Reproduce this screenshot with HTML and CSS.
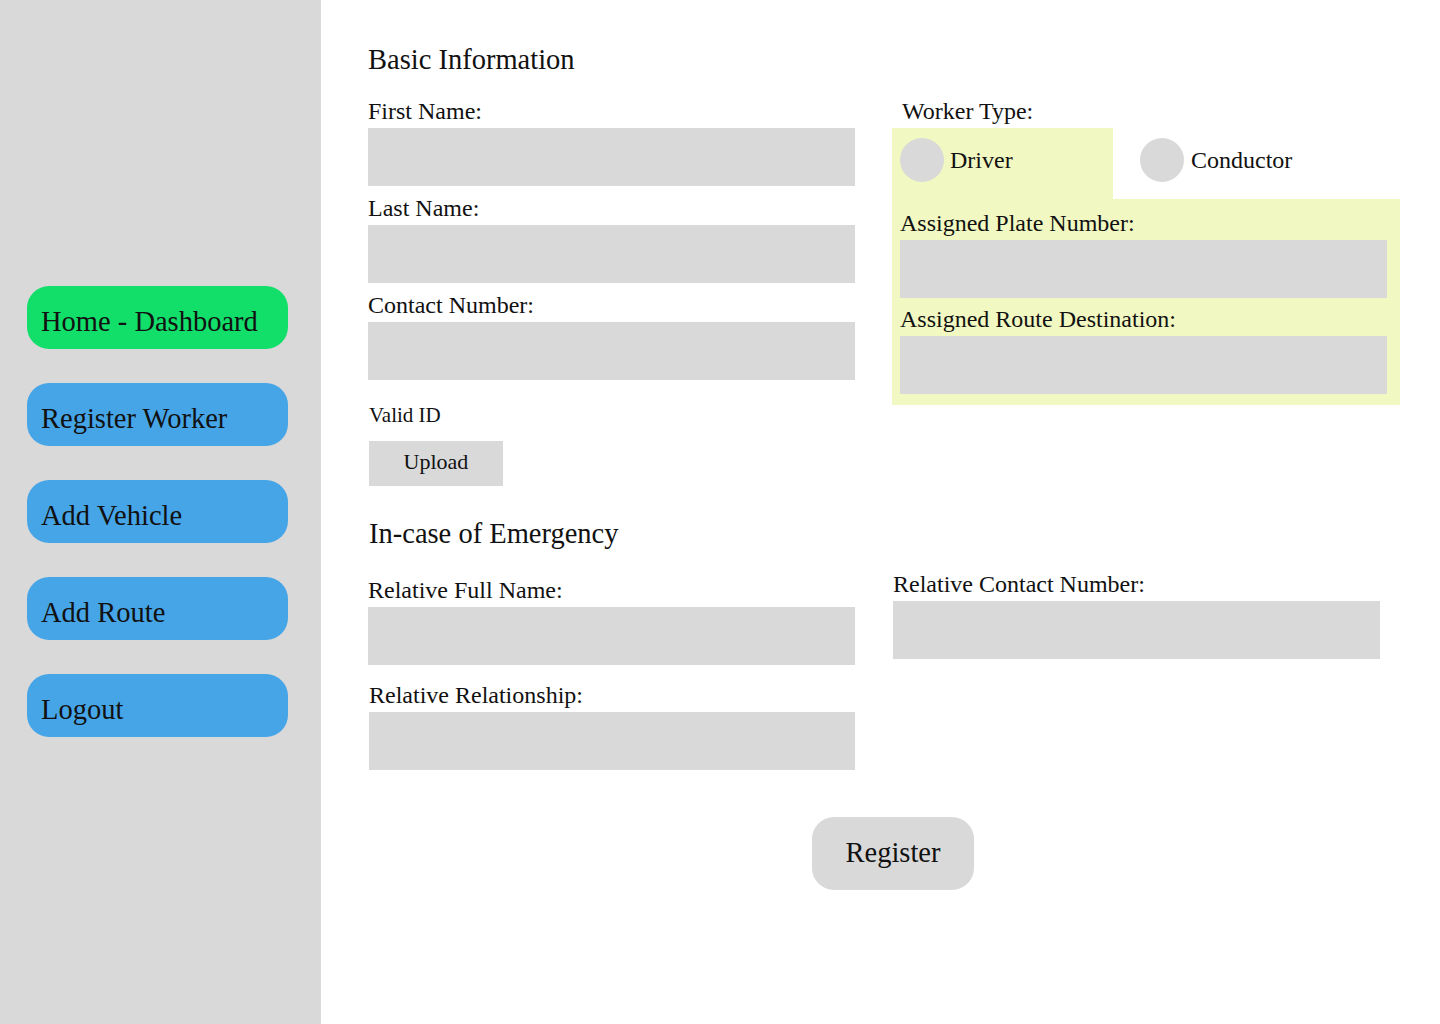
FILE: index.html
```html
<!DOCTYPE html>
<html lang="en">
<head>
<meta charset="utf-8">
<title>Register Worker</title>
<link rel="stylesheet" href="styles.css">
</head>
<body>
<div class="app">
  <aside class="sidebar">
    <nav class="nav">
      <a class="nav-btn nav-active">Home - Dashboard</a>
      <a class="nav-btn">Register Worker</a>
      <a class="nav-btn">Add Vehicle</a>
      <a class="nav-btn">Add Route</a>
      <a class="nav-btn">Logout</a>
    </nav>
  </aside>
  <main class="main">
    <h2 class="heading">Basic Information</h2>
    <section class="basic">
      <div class="col-left">
        <div class="field">
          <div class="label">First Name:</div>
          <div class="input"></div>
        </div>
        <div class="field">
          <div class="label">Last Name:</div>
          <div class="input"></div>
        </div>
        <div class="field">
          <div class="label">Contact Number:</div>
          <div class="input"></div>
        </div>
        <div class="valid-label">Valid ID</div>
        <div class="upload">Upload</div>
      </div>
      <div class="col-right">
        <div class="label worker-label">Worker Type:</div>
        <div class="worker-box">
          <div class="radios">
            <div class="radio-opt radio-selected"><span class="circle"></span><span class="radio-text">Driver</span></div>
            <div class="radio-opt radio-other"><span class="circle"></span><span class="radio-text">Conductor</span></div>
          </div>
          <div class="assigned">
            <div class="field">
              <div class="label">Assigned Plate Number:</div>
              <div class="input"></div>
            </div>
            <div class="field">
              <div class="label">Assigned Route Destination:</div>
              <div class="input"></div>
            </div>
          </div>
        </div>
      </div>
    </section>

    <h2 class="heading heading-emergency">In-case of Emergency</h2>
    <section class="emergency">
      <div class="col-left">
        <div class="field field-relname">
          <div class="label">Relative Full Name:</div>
          <div class="input"></div>
        </div>
        <div class="field field-relrel">
          <div class="label">Relative Relationship:</div>
          <div class="input"></div>
        </div>
      </div>
      <div class="col-right">
        <div class="field field-relcontact">
          <div class="label">Relative Contact Number:</div>
          <div class="input"></div>
        </div>
      </div>
    </section>

    <div class="submit-row">
      <button class="register-btn">Register</button>
    </div>
  </main>
</div>
</body>
</html>
```

FILE: styles.css
```css
* {
  box-sizing: border-box;
}

html, body {
  margin: 0;
  padding: 0;
  background: #ffffff;
}

body {
  font-family: "Liberation Serif", "Times New Roman", serif;
  color: #111111;
}

.app {
  display: flex;
  min-height: 1024px;
}

.sidebar {
  width: 321px;
  flex: 0 0 321px;
  background: #d9d9d9;
  padding-top: 286px;
}

.nav {
  display: flex;
  flex-direction: column;
  gap: 34px;
  padding-left: 27px;
}

.nav-btn {
  display: flex;
  align-items: center;
  width: 261px;
  height: 63px;
  padding-left: 14px;
  padding-top: 9px;
  border-radius: 22px;
  background: #46a5e7;
  font-size: 28.5px;
  color: #111111;
  text-decoration: none;
}

.nav-active {
  background: #12de6a;
}

.main {
  flex: 1;
  padding: 44px 0 0 47px;
}

.heading {
  margin: 0;
  font-weight: normal;
  font-size: 28.5px;
  line-height: 32px;
}

.basic {
  display: flex;
  gap: 37px;
  margin-top: 22px;
}

.col-left {
  width: 487px;
  display: flex;
  flex-direction: column;
}

.col-right {
  width: 508px;
  display: flex;
  flex-direction: column;
}

.field {
  display: flex;
  flex-direction: column;
}

.col-left .field + .field {
  margin-top: 9px;
}

.label {
  font-size: 24px;
  line-height: 26px;
  margin-bottom: 4px;
  white-space: nowrap;
}

.input {
  height: 58px;
  background: #d9d9d9;
}

.valid-label {
  margin-top: 23px;
  font-size: 21px;
  line-height: 24px;
  padding-left: 1px;
}

.upload {
  margin-top: 14px;
  margin-left: 1px;
  width: 134px;
  height: 45px;
  background: #d9d9d9;
  display: flex;
  align-items: center;
  justify-content: center;
  font-size: 22px;
  padding-bottom: 3px;
}

.worker-label {
  padding-left: 10px;
}

.worker-box {
  display: flex;
  flex-direction: column;
}

.radios {
  display: flex;
  height: 71px;
}

.radio-opt {
  display: flex;
  align-items: flex-start;
  padding-top: 10px;
  font-size: 24px;
  line-height: 26px;
}

.radio-selected {
  width: 221px;
  background: #f1f8c2;
  padding-left: 8px;
}

.radio-other {
  padding-left: 27px;
}

.circle {
  width: 44px;
  height: 44px;
  border-radius: 50%;
  background: #d9d9d9;
  flex: 0 0 44px;
}

.radio-text {
  margin-top: 9px;
  margin-left: 6px;
}

.radio-other .radio-text {
  margin-left: 7px;
}

.assigned {
  background: #f1f8c2;
  padding: 11px 13px 11px 8px;
}

.assigned .field + .field {
  margin-top: 8px;
}

.heading-emergency {
  margin-top: 32px;
  padding-left: 1px;
}

.emergency {
  display: flex;
  gap: 37px;
}

.field-relname {
  margin-top: 27px;
}

.col-left .field + .field-relrel {
  margin-top: 17px;
}

.field-relrel .label,
.field-relrel .input {
  margin-left: 1px;
}

.field-relcontact {
  margin-top: 21px;
  padding-left: 1px;
  width: 488px;
}

.submit-row {
  width: 1050px;
  display: flex;
  justify-content: center;
  margin-top: 47px;
}

.register-btn {
  width: 162px;
  height: 73px;
  border: none;
  border-radius: 22px;
  background: #d9d9d9;
  font-family: "Liberation Serif", "Times New Roman", serif;
  font-size: 28.5px;
  color: #111111;
  padding: 0 0 2px 0;
}
```
